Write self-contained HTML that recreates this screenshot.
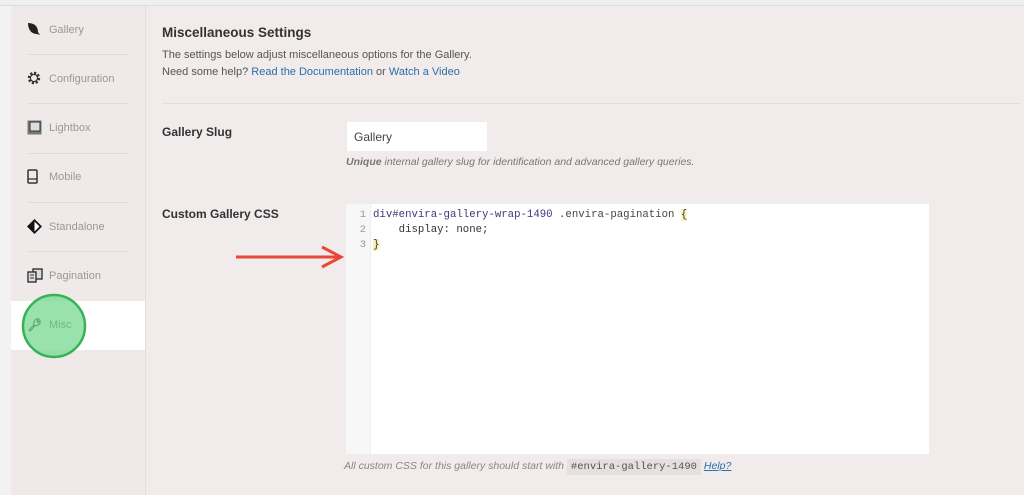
<!DOCTYPE html>
<html><head><style>
body{margin:0;width:1024px;height:495px;background:#f2f2f2;font-family:"Liberation Sans",sans-serif;position:relative;overflow:hidden}
.top{position:absolute;left:0;top:0;width:1024px;height:5px;background:#efefef;border-bottom:1px solid #dcdcdc}
.side{position:absolute;left:11px;top:6px;width:134px;height:489px;background:#efe9e9;border-right:1px solid #e3dddd}
.main{position:absolute;left:146px;top:6px;width:878px;height:489px;background:#f1ebeb}
.it{position:absolute;left:0;width:134px;height:49px;font-size:11px;color:#999}
.it span{position:absolute;left:38px;top:18px}
.it svg{position:absolute;left:16px;top:16px}
.sep{position:absolute;left:17px;width:100px;height:1px;background:#e0dada}
.t{position:absolute;white-space:nowrap}
a{color:#2a6fa8;text-decoration:none}
</style></head><body>
<div class="top"></div>
<div class="side">
 <div class="it" style="top:0"><svg width="14" height="14" viewBox="0 0 14 14"><path d="M1 1C7 1 11 4 11 10L13 13L10 12C4 12 1 7 1 1Z" fill="#222"/></svg><span>Gallery</span></div>
 <div class="sep" style="top:48px"></div>
 <div class="it" style="top:49px"><svg width="14" height="14" viewBox="0 0 14 14"><circle cx="7" cy="7" r="5" fill="none" stroke="#333" stroke-width="2.4" stroke-dasharray="2.2 1.7"/><circle cx="7" cy="7" r="3.6" fill="none" stroke="#333" stroke-width="1.2"/></svg><span>Configuration</span></div>
 <div class="sep" style="top:97px"></div>
 <div class="it" style="top:98px"><svg width="15" height="15" viewBox="0 0 15 15"><rect x="0.5" y="0.5" width="14" height="14" fill="#777"/><rect x="3" y="2" width="10" height="9" fill="#ddd" stroke="#333"/></svg><span>Lightbox</span></div>
 <div class="sep" style="top:147px"></div>
 <div class="it" style="top:147px"><svg width="11" height="15" viewBox="0 0 11 15"><rect x="1" y="1" width="9" height="13" rx="1" fill="none" stroke="#333" stroke-width="1.5"/><line x1="1" y1="10" x2="10" y2="10" stroke="#333" stroke-width="1.3"/></svg><span>Mobile</span></div>
 <div class="sep" style="top:196px"></div>
 <div class="it" style="top:197px"><svg width="15" height="15" viewBox="0 0 15 15"><path d="M7.5 0L15 7.5L7.5 15L0 7.5Z" fill="#111"/><path d="M7.5 2.5L12.5 7.5L7.5 12.5Z" fill="#fff"/></svg><span>Standalone</span></div>
 <div class="sep" style="top:245px"></div>
 <div class="it" style="top:246px"><svg width="16" height="15" viewBox="0 0 16 15"><rect x="6" y="1" width="9" height="10" fill="#ddd" stroke="#333" stroke-width="1.4"/><rect x="1" y="4" width="8" height="10" fill="#ddd" stroke="#333" stroke-width="1.4"/><line x1="3" y1="7" x2="7" y2="7" stroke="#333"/><line x1="3" y1="10" x2="7" y2="10" stroke="#333"/></svg><span>Pagination</span></div>
 <div class="it" style="top:295px;background:#fff"><svg width="15" height="15" viewBox="0 0 15 15"><path d="M2 13L7 8C6 5 8 1 12 2L10 4.5L11 5.5L13 3.5C14 7 10.5 9 8 8.5L3.5 14Z" fill="none" stroke="#444" stroke-width="1.2"/></svg><span style="color:#777">Misc</span></div>
</div>
<div class="main">
 <div class="t" style="left:16px;top:19px;font-size:13.5px;font-weight:bold;color:#333">Miscellaneous Settings</div>
 <div class="t" style="left:16px;top:43px;font-size:11px;color:#555">The settings below adjust miscellaneous options for the Gallery.</div>
 <div class="t" style="left:16px;top:60px;font-size:11px;color:#555">Need some help? <a>Read the Documentation</a> or <a>Watch a Video</a></div>
 <div style="position:absolute;left:16px;top:97px;width:858px;height:1px;background:#e2dcdc"></div>
 <div class="t" style="left:16px;top:119px;font-size:12px;font-weight:bold;color:#333">Gallery Slug</div>
 <div style="position:absolute;left:201px;top:116px;width:140px;height:29px;background:#fff"></div>
 <div class="t" style="left:208px;top:124px;font-size:12px;color:#444">Gallery</div>
 <div class="t" style="left:200px;top:150px;font-size:10.5px;font-style:italic;color:#777"><b>Unique</b> internal gallery slug for identification and advanced gallery queries.</div>
 <div class="t" style="left:16px;top:201px;font-size:12px;font-weight:bold;color:#333">Custom Gallery CSS</div>
 <div style="position:absolute;left:200px;top:198px;width:583px;height:250px;background:#fff"></div>
 <div style="position:absolute;left:200px;top:198px;width:24px;height:250px;background:#f7f7f7;border-right:1px solid #eee"></div>
 <div class="t" style="left:200px;top:202px;width:20px;text-align:right;font-family:'Liberation Mono',monospace;font-size:10.5px;line-height:15px;color:#999">1<br>2<br>3</div>
 <div class="t" style="left:227px;top:202px;font-family:'Liberation Mono',monospace;font-size:10.7px;line-height:15px;color:#333"><span style="color:#3a3a7a">div#envira-gallery-wrap-1490</span> <span style="color:#444">.envira-pagination</span> <span style="background:#fbf2c0">{</span><br>&nbsp;&nbsp;&nbsp;&nbsp;display: none;<br><span style="background:#fbf2c0">}</span></div>
 <div class="t" style="left:198px;top:454px;font-size:10.5px;font-style:italic;color:#888">All custom CSS for this gallery should start with <span style="font-style:normal;font-family:'Liberation Mono',monospace;background:#e4e0e0;padding:2px 4px;color:#555;font-size:10.5px">#envira-gallery-1490</span> <a style="text-decoration:underline">Help?</a></div>
</div>
<svg style="position:absolute;left:0;top:0" width="1024" height="495">
 <line x1="236" y1="257" x2="338" y2="257" stroke="#e8473a" stroke-width="3"/>
 <path d="M322 247L341 257L322 267" fill="none" stroke="#e8473a" stroke-width="3"/>
 <circle cx="54" cy="326" r="31" fill="#6fd68a" fill-opacity="0.7" stroke="#35b355" stroke-width="2.5"/>
</svg>
</body></html>
